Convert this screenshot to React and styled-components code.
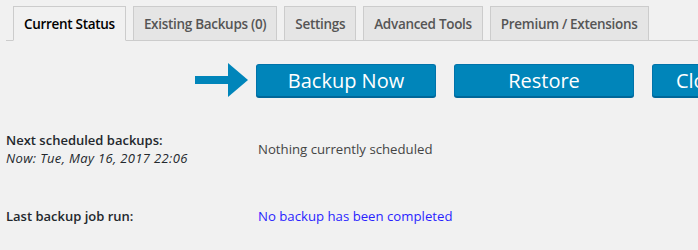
import React from 'react';
import styled, { createGlobalStyle } from 'styled-components';

const GlobalStyle = createGlobalStyle`
  html, body {
    margin: 0;
    padding: 0;
    background: #f1f1f1;
  }
  body {
    font-family: 'Open Sans', 'Noto Sans', sans-serif;
    color: #23282d;
    overflow: hidden;
  }
`;

const tabs = [
  { label: 'Current Status', active: true },
  { label: 'Existing Backups (0)' },
  { label: 'Settings' },
  { label: 'Advanced Tools' },
  { label: 'Premium / Extensions' },
];

const App = () => {
  return (
    <Page>
      <GlobalStyle />
      <TabNav>
        {tabs.map((tab) => (
          <Tab key={tab.label} active={tab.active}>
            {tab.label}
          </Tab>
        ))}
      </TabNav>
      <ActionRow>
        <Arrow width='53' height='34' viewBox='0 0 53 34'>
          <rect x='0' y='13' width='36' height='8' fill='#0085ba' />
          <polygon points='33,0 53,17 33,34' fill='#0085ba' />
        </Arrow>
        <Buttons>
          <Button>Backup Now</Button>
          <Button>Restore</Button>
          <Button>Clone/Migrate</Button>
        </Buttons>
      </ActionRow>
      <StatusRow>
        <Label>
          <strong>Next scheduled backups:</strong>
          <em>Now: Tue, May 16, 2017 22:06</em>
        </Label>
        <Value>Nothing currently scheduled</Value>
      </StatusRow>
      <StatusRow last>
        <Label>
          <strong>Last backup job run:</strong>
        </Label>
        <Value link>No backup has been completed</Value>
      </StatusRow>
    </Page>
  );
};

export default App;

const Page = styled.div`
  width: 698px;
  height: 250px;
  padding: 6px 0 0 6px;
  box-sizing: border-box;
  overflow: hidden;
`;

const TabNav = styled.div`
  display: flex;
  gap: 7px;
  padding-left: 7px;
  border-bottom: 1px solid #ccc;
  height: 34px;
`;

const Tab = styled.div`
  display: flex;
  align-items: center;
  padding: 1px 10px 0;
  height: 35px;
  margin-bottom: -1px;
  border: 1px solid #ccc;
  border-bottom: ${(props) => (props.active ? '1px solid #f1f1f1' : '1px solid #ccc')};
  background: ${(props) => (props.active ? '#f1f1f1' : '#e5e5e5')};
  color: ${(props) => (props.active ? '#000' : '#555')};
  font-size: 13.5px;
  letter-spacing: -0.3px;
  font-weight: 600;
  white-space: nowrap;
  box-sizing: border-box;
`;

const ActionRow = styled.div`
  display: flex;
  align-items: center;
  gap: 8px;
  padding-left: 189px;
  margin-top: 22px;
`;

const Arrow = styled.svg`
  flex: none;
`;

const Buttons = styled.div`
  display: flex;
  gap: 18px;
`;

const Button = styled.div`
  flex: none;
  width: 180px;
  height: 33px;
  box-sizing: border-box;
  display: flex;
  align-items: center;
  justify-content: center;
  background: #0085ba;
  border: 1px solid #0073aa;
  border-bottom-color: #006799;
  border-radius: 3px;
  box-shadow: 0 1px 0 #006799;
  color: #fff;
  font-size: 20px;
  white-space: nowrap;
  overflow: hidden;
`;

const StatusRow = styled.div`
  display: flex;
  align-items: center;
  margin-top: ${(props) => (props.last ? '40px' : '34px')};
`;

const Label = styled.div`
  width: 252px;
  display: flex;
  flex-direction: column;
  font-size: 13px;
  line-height: 18px;

  strong {
    font-weight: 600;
  }

  em {
    font-style: italic;
    letter-spacing: 0.35px;
  }
`;

const Value = styled.div`
  font-size: 13.2px;
  color: ${(props) => (props.link ? '#2a1fff' : '#444')};
`;
